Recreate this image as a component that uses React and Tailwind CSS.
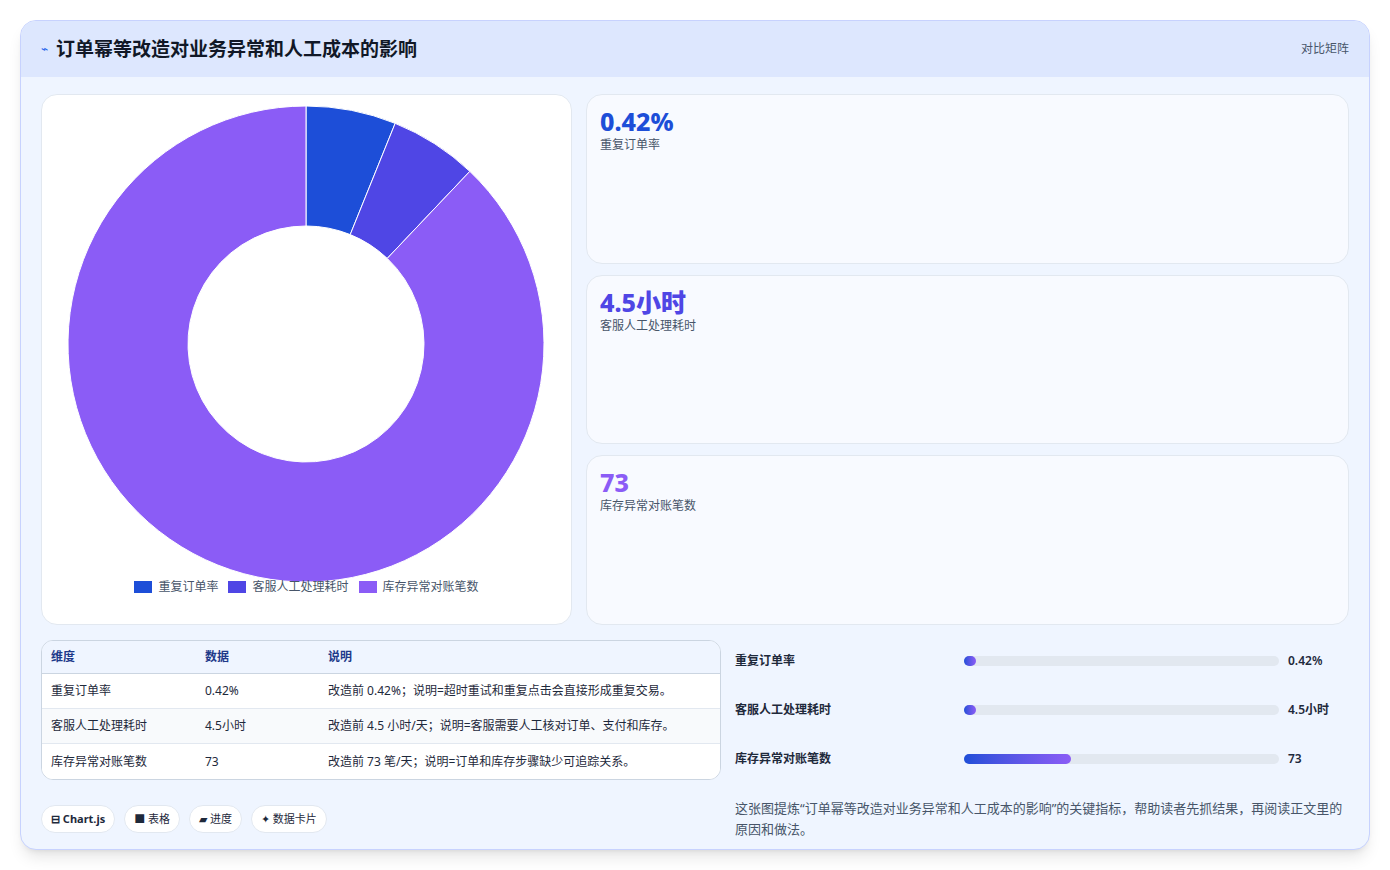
const F = { fontFamily: '"Noto Sans", "Noto Sans CJK SC", sans-serif' };

function arc(cx, cy, r, r0, a1, a2) {
  const p = (rad, a) => {
    const t = ((a - 90) * Math.PI) / 180;
    return [cx + rad * Math.cos(t), cy + rad * Math.sin(t)];
  };
  const large = a2 - a1 > 180 ? 1 : 0;
  const [x1, y1] = p(r, a1);
  const [x2, y2] = p(r, a2);
  const [x3, y3] = p(r0, a2);
  const [x4, y4] = p(r0, a1);
  return `M${x1} ${y1}A${r} ${r} 0 ${large} 1 ${x2} ${y2}L${x3} ${y3}A${r0} ${r0} 0 ${large} 0 ${x4} ${y4}Z`;
}

const stats = [
  { v: "0.42%", l: "重复订单率", c: "text-[#1d4ed8]" },
  { v: "4.5小时", l: "客服人工处理耗时", c: "text-[#4f46e5]" },
  { v: "73", l: "库存异常对账笔数", c: "text-[#8b5cf6]" },
];

const rows = [
  ["重复订单率", "0.42%", "改造前 0.42%；说明=超时重试和重复点击会直接形成重复交易。"],
  ["客服人工处理耗时", "4.5小时", "改造前 4.5 小时/天；说明=客服需要人工核对订单、支付和库存。"],
  ["库存异常对账笔数", "73", "改造前 73 笔/天；说明=订单和库存步骤缺少可追踪关系。"],
];

const bars = [
  ["重复订单率", "0.42%", "w-[12px]"],
  ["客服人工处理耗时", "4.5小时", "w-[12px]"],
  ["库存异常对账笔数", "73", "w-[34%]"],
];

export default function App() {
  return (
    <div className="min-h-screen bg-white p-5" style={F}>
      <div className="rounded-2xl border border-[#c7d2fe] bg-[#eff5ff] shadow-lg overflow-hidden h-[830px] flex flex-col">
        <div className="h-[56px] bg-[#dde7fe] flex items-center justify-between px-5">
          <div className="flex items-center gap-2">
            <span className="text-[#2563eb] text-xs">⌁</span>
            <h1 className="text-[19px] font-bold text-[#111827]">订单幂等改造对业务异常和人工成本的影响</h1>
          </div>
          <span className="text-xs text-[#475569]">对比矩阵</span>
        </div>
        <div className="flex-1 px-5 pt-[17px] flex flex-col">
          <div className="flex gap-[14px] h-[531px]">
            <div className="w-[531px] shrink-0 bg-white rounded-2xl border border-[#e2e8f0] flex flex-col items-center">
              <svg width="531" height="490" viewBox="0 0 531 490">
                <path d={arc(265, 249, 238, 118, 0, 22)} fill="#1d4ed8" stroke="#fff" strokeWidth="1" />
                <path d={arc(265, 249, 238, 118, 22, 43.5)} fill="#4f46e5" stroke="#fff" strokeWidth="1" />
                <path d={arc(265, 249, 238, 118, 43.5, 360)} fill="#8b5cf6" stroke="#fff" strokeWidth="1" />
              </svg>
              <div className="flex gap-[10px] text-xs text-[#475569] mt-[-6px]">
                {[["#1d4ed8", "重复订单率"], ["#4f46e5", "客服人工处理耗时"], ["#8b5cf6", "库存异常对账笔数"]].map(([c, t]) => (
                  <div key={t} className="flex items-center gap-[6px]">
                    <span className="w-[18px] h-[12px] inline-block" style={{ background: c }} />
                    {t}
                  </div>
                ))}
              </div>
            </div>
            <div className="flex-1 flex flex-col gap-[11px]">
              {stats.map((s) => (
                <div key={s.l} className="flex-1 rounded-2xl border border-[#e2e8f0] bg-[#f8faff] px-[13px] pt-[10px]">
                  <div className={`text-[25px] font-extrabold leading-[32px] ${s.c}`}>{s.v}</div>
                  <div className="text-xs text-[#475569]">{s.l}</div>
                </div>
              ))}
            </div>
          </div>
          <div className="flex gap-[14px] mt-[15px]">
            <div className="w-[680px] shrink-0">
              <div className="rounded-xl border border-[#cbd5e1] bg-white overflow-hidden text-xs">
                <div className="flex h-[33px] items-center bg-[#eff5ff] font-bold text-[#1e3a8a] border-b border-[#cbd5e1]">
                  <div className="w-[163px] pl-[9px]">维度</div>
                  <div className="w-[123px]">数据</div>
                  <div>说明</div>
                </div>
                {rows.map((r, i) => (
                  <div key={r[0]} className={`flex h-[35px] items-center text-[#1e293b] ${i === 1 ? "bg-[#f8fafc]" : "bg-white"} ${i < 2 ? "border-b border-[#e2e8f0]" : ""}`}>
                    <div className="w-[163px] pl-[9px]">{r[0]}</div>
                    <div className="w-[123px]">{r[1]}</div>
                    <div>{r[2]}</div>
                  </div>
                ))}
              </div>
              <div className="flex gap-[9px] mt-[25px] text-[11px] text-[#1e293b]">
                {["⊟ Chart.js", "■ 表格", "▰ 进度", "✦ 数据卡片"].map((t, i) => (
                  <span key={t} className={`rounded-full bg-white border border-[#e2e8f0] px-[9px] h-[28px] flex items-center ${i === 0 ? "font-bold" : ""}`}>{t}</span>
                ))}
              </div>
            </div>
            <div className="flex-1 pr-[6px]">
              <div className="flex flex-col gap-[31px] pt-[12px]">
                {bars.map(([l, v, w]) => (
                  <div key={l} className="flex items-center h-[18px] text-xs font-semibold text-[#1e293b]">
                    <div className="w-[229px]">{l}</div>
                    <div className="w-[315px] h-[10px] rounded-full bg-[#e2e8f0]">
                      <div className={`h-full rounded-full bg-gradient-to-r from-[#1d4ed8] to-[#8b5cf6] ${w}`} />
                    </div>
                    <div className="ml-[9px]">{v}</div>
                  </div>
                ))}
              </div>
              <p className="mt-[30px] text-[13px] leading-[21px] text-[#475569]">
                这张图提炼“订单幂等改造对业务异常和人工成本的影响”的关键指标，帮助读者先抓结果，再阅读正文里的原因和做法。
              </p>
            </div>
          </div>
        </div>
      </div>
    </div>
  );
}
